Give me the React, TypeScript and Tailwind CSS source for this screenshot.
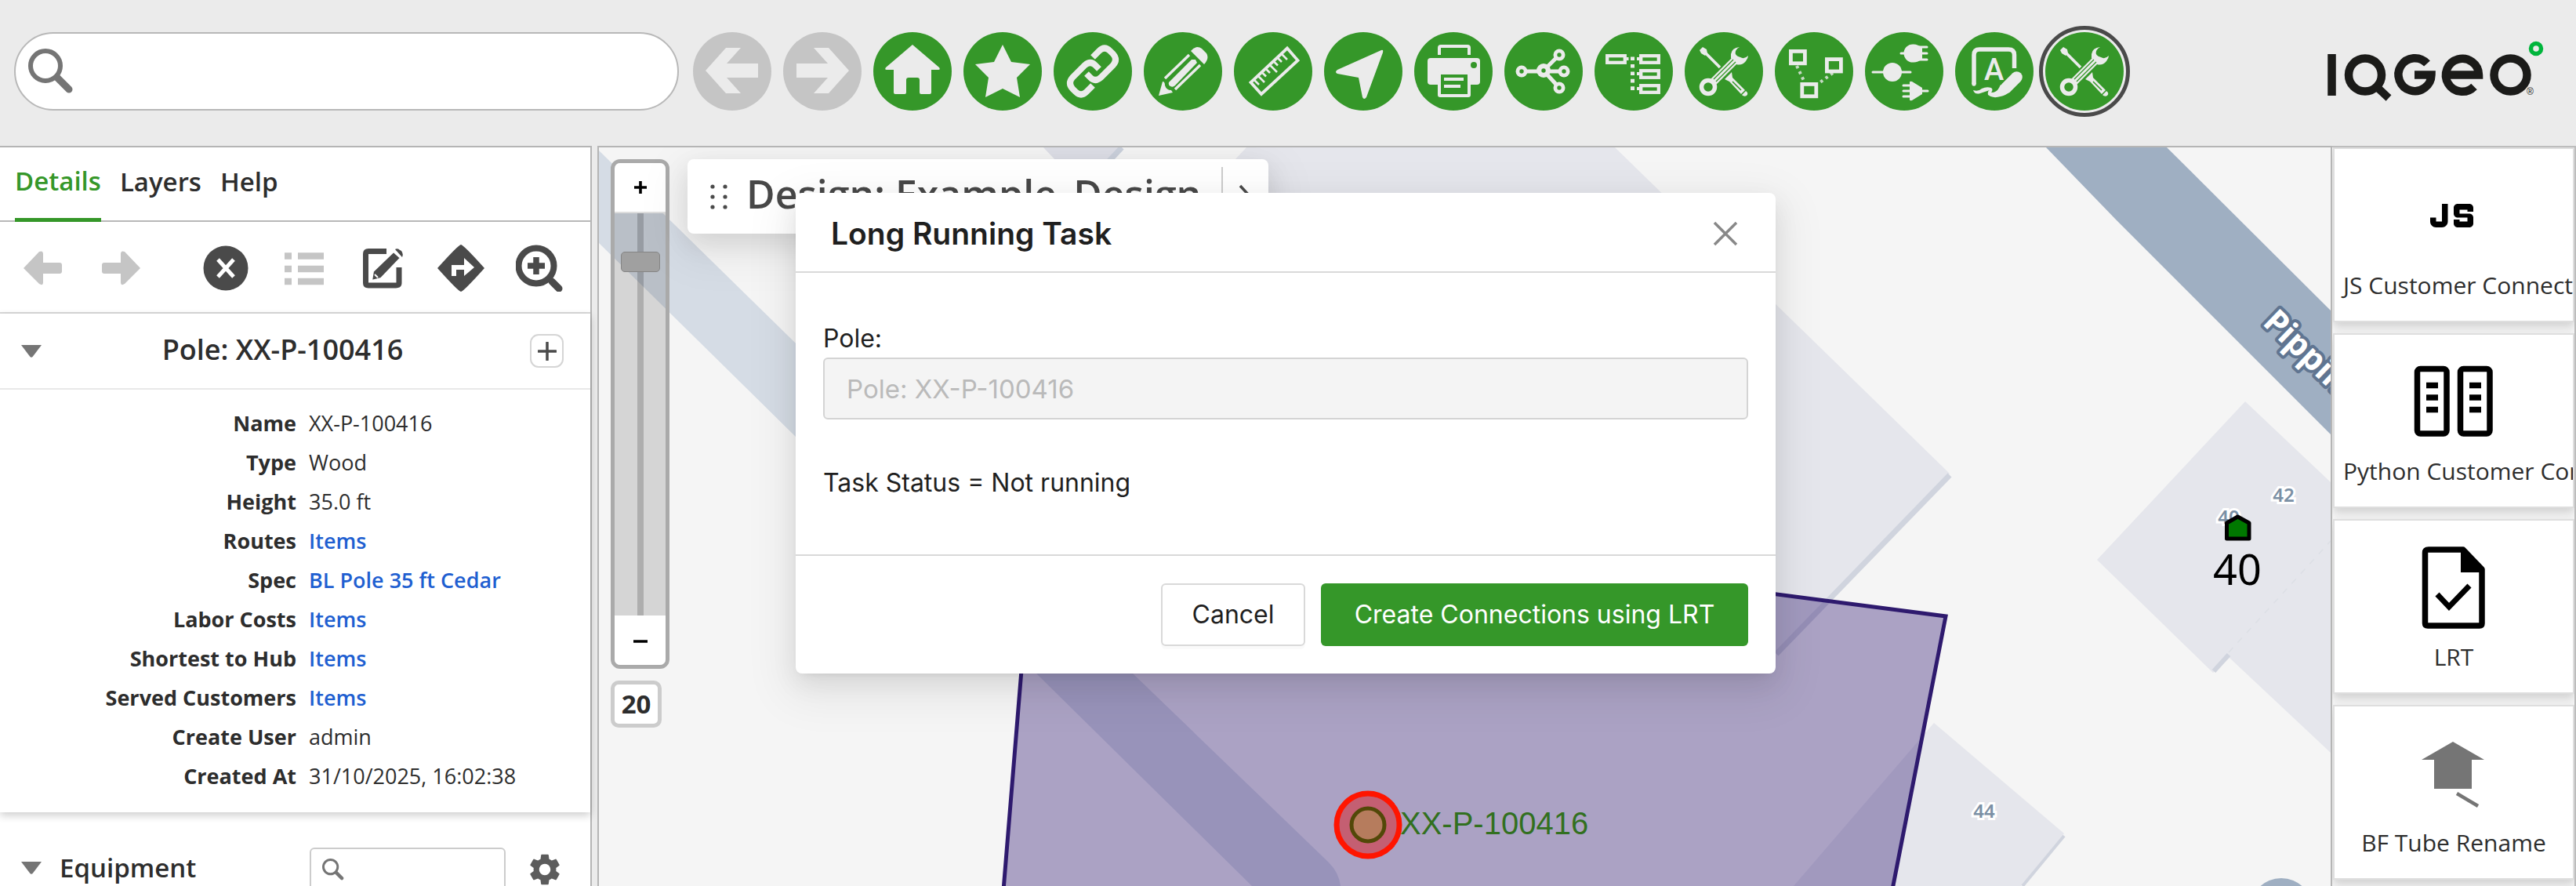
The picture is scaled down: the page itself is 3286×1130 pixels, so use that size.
import type { ReactNode } from "react";
import { MdJavascript, MdSettings } from "react-icons/md";

const G = "#359729";
const L = "#ebebeb";

/* ---------- toolbar glyphs, drawn on a 100 x 100 disc ---------- */

const BackGlyph = () => <path fill={L} d="M16 49 42 20H61L43 40H83V58H43L61 78H42Z" />;
const ForwardGlyph = () => <path fill={L} d="M84 49 58 20H39L57 40H17V58H57L39 78H58Z" />;
const HomeGlyph = () => (
  <path fill={L} d="M50 16 84 45Q86 48 83 48H74V77Q74 79 72 79H61Q59 79 59 77V61Q59 58 56 58H45Q42 58 42 61V77Q42 79 40 79H28Q26 79 26 77V48H17Q14 48 16 45Z" />
);
const StarGlyph = () => <path fill={L} d="M50 16 61 38 85 41 68 58 72 83 50 72 28 83 32 58 15 41 39 38Z" />;
const linkHalf = "M50 32 58 24Q65 17 72 24L76 28Q82 35 76 42L60 58Q53 64 47 58L42 53";
const LinkGlyph = () => (
  <g fill="none" stroke={L} strokeWidth="8">
    <path d={linkHalf} />
    <path d={linkHalf} transform="rotate(180 50 50)" />
  </g>
);
const PencilGlyph = () => (
  <g fill={L}>
    <path d="M60 24Q67 16 74 21L80 27Q84 33 77 41Z" />
    <path d="M27 59 58 29M40 73 72 42" stroke={L} strokeWidth="3.4" />
    <path d="M61 35 32 64Q31 68 34 69 37 71 40 68L68 39 66 35Z" />
    <path d="M19 81 24 63Q27 63 27 68 29 74 35 74L37 77Z" />
  </g>
);
const RulerGlyph = () => (
  <g fill="none" stroke={L}>
    <path d="M68 20.500 81.500 36 35 79 21.500 64Z" strokeWidth="3.800" />
    <path d="M26 61l6 6M31 56l8 8M36 51.500l5 5M41 47l5 5M46 42l9 9M51 37.500l5 5M56 33l5 5M61 28l7 7" strokeWidth="2.600" />
  </g>
);
const NavigateGlyph = () => (
  <path fill={L} d="M73 23Q76 22 75 26L54 83Q51 87 49 83L44 58 17 53Q13 51 17 48Z" />
);
const PrintGlyph = () => (
  <>
    <path d="M32 29V20Q32 18 34 18H68Q70 18 70 20V29" fill="none" stroke={L} strokeWidth="4" />
    <rect x="17" y="33" width="67" height="34" rx="4" fill={L} />
    <rect x="30" y="50" width="42" height="33" rx="3" fill={L} />
    <circle cx="76" cy="42" r="4" fill={G} />
    <rect x="34" y="54" width="34" height="25" fill={G} />
    <path d="M38 60H63M38 69H59" stroke={L} strokeWidth="4" />
  </>
);
const NodesGlyph = () => (
  <>
    <path d="M22 50H76M50 49 70 29M50 49 70 71" stroke={L} strokeWidth="5" />
    {[[22, 50, 7.5], [50, 49, 9], [70, 29, 7.5], [76, 50, 7.5], [70, 71, 7.5]].map(([x, y, r]) => (
      <g key={`${x}-${y}`}>
        <circle cx={x} cy={y} r={r} fill={L} />
        <circle cx={x} cy={y} r="2.700" fill={G} />
      </g>
    ))}
  </>
);
const TreeGlyph = () => (
  <>
    <path d="M41 34H43.500M54 34H57M54 53H57M54 72H57" stroke={L} strokeWidth="4" />
    <g fill="none" stroke={L} strokeWidth="4.300">
      <rect x="16.200" y="30.200" width="22.600" height="8.600" />
      <rect x="59.200" y="30.200" width="22.600" height="8.600" />
      <rect x="59.200" y="49.200" width="22.600" height="8.600" />
      <rect x="59.200" y="68.200" width="22.600" height="8.600" />
    </g>
    <path d="M48.500 31.500V74.500" stroke={L} strokeWidth="5" strokeDasharray="4.600 4.850" />
  </>
);
const ToolsGlyph = () => (
  <>
    <path d="M19 23 23 19 28 22 29 27 26 30 21 27Z" fill={L} />
    <path d="M27 27 45 45" stroke={L} strokeWidth="3.800" />
    <path d="M51 60 54 57 60 51 61 58 78 75Q82 78 79 81 75 83 72 79L57 63Z" fill={L} />
    <path d="M61 63 72 74M71 81 80 72" stroke={G} strokeWidth="1.500" />
    <path d="M35 65 64 36" stroke={L} strokeWidth="10" />
    <path d="M70 19Q60 20 59 28V33L66 41Q73 43 78 37 81 33 81 30 76 35 71 32 63 30 65 24 66 21 70 19Z" fill={L} />
    <path d="M37 60 62 35M40 63 65 38" stroke={G} strokeWidth="1.300" />
    <circle cx="30" cy="70" r="8.500" fill="none" stroke={L} strokeWidth="5.500" />
  </>
);
const TopologyGlyph = () => (
  <>
    <path d="M28 43 38 64M74 52 55 66" stroke={L} strokeWidth="4" strokeDasharray="3.500 4.500" opacity="0.8" />
    <g fill="none" stroke={L} strokeWidth="4.800">
      <rect x="20.400" y="24.400" width="18" height="15.400" />
      <rect x="66.400" y="34.600" width="18" height="15.400" />
      <rect x="34.800" y="66.400" width="18" height="15.400" />
    </g>
  </>
);
const PlugsGlyph = () => (
  <>
    <circle cx="35" cy="51" r="12" fill={L} />
    <path d="M73 20Q67 15 61 15.500A11.500 11.500 0 0 0 61 38.500Q67 39 73 34Z" fill={L} />
    <path d="M57 64Q57 62 60 63L73 71V79L60 87Q57 88 57 86Z" fill={L} />
    <path d="M10 51H58M46 27H79M68 19H79M68 35H79M49 68H60M49 75H80M49 82H60" stroke={L} strokeWidth="3" strokeLinecap="round" />
  </>
);
const AnnotateGlyph = () => (
  <>
    <path d="M24 66V29Q24 22 31 22H68Q75.500 22 75.500 29V46" fill="none" stroke={L} strokeWidth="5.500" />
    <circle cx="24" cy="66" r="2.700" fill={L} />
    <text x="49.500" y="61" textAnchor="middle" fontSize="38" fontWeight="500" fontFamily="Roboto, sans-serif" fill={L}>A</text>
    <path d="M79 57 62 74" stroke={G} strokeWidth="18" strokeLinecap="round" />
    <path d="M78.500 57.500 65 71" stroke={L} strokeWidth="14.500" strokeLinecap="round" />
    <path d="M58 67 70 76Q64 81 58 82 48 85 42 80 41 75 44 74 38 76 32 78 25 80 23 74 30 76 34 72 40 69 46 71 49 73 46 77 53 77 56 71Z" fill={L} />
  </>
);

function ToolButton({ label, glyph, disabled, active }: { label: string; glyph: ReactNode; disabled?: boolean; active?: boolean }) {
  return (
    <button
      type="button"
      aria-label={label}
      disabled={disabled}
      className={
        "size-[100px] shrink-0 rounded-full " +
        (disabled ? "bg-[#c5c5c5]" : "bg-[#359729]") +
        (active ? " outline-[5px] outline-offset-[3px] outline-[#4a4a4a]" : "")
      }
    >
      <svg viewBox="0 0 100 100" className="size-full">{glyph}</svg>
    </button>
  );
}

function Logo() {
  return (
    <svg viewBox="2969 50 280 84" className="ml-auto h-[84px] w-[280px] shrink-0" role="img" aria-label="IQGeo">
      <g fill="none" stroke="#1b1b19" strokeWidth="10.500">
        <path d="M2974.500 70V123" />
        <circle cx="3017" cy="96.500" r="21" />
        <path d="M3032 112 3047 126" strokeWidth="10" />
        <path d="M3096 82A21 21 0 1 0 3101.500 96.500H3080" />
        <path d="M3120 96.500H3162A21 21 0 1 0 3156 111.500" />
        <circle cx="3202.500" cy="96.500" r="21" />
      </g>
      <circle cx="3235" cy="63" r="6.500" fill="none" stroke="#00b53c" strokeWidth="5.500" />
      <text x="3223" y="122" fontSize="12" fontFamily="Liberation Sans, sans-serif" fill="#1b1b19">®</text>
    </svg>
  );
}

function SearchIcon({ className }: { className: string }) {
  return (
    <svg viewBox="0 0 58 58" className={className} aria-hidden="true">
      <circle cx="22" cy="22" r="19" fill="none" stroke="#757575" strokeWidth="6" />
      <path d="M37 37 52 52" stroke="#757575" strokeWidth="9" strokeLinecap="round" />
    </svg>
  );
}

function Header() {
  return (
    <header className="flex h-[186px] shrink-0 items-center bg-[#ebebeb] pr-[37px] pb-1 pl-[18px]">
      <label className="flex h-[100px] w-[848px] items-center rounded-full border-2 border-[#b8b8b8] bg-white pl-4">
        <SearchIcon className="size-[58px]" />
        <input aria-label="Search" className="h-full min-w-0 flex-1 bg-transparent px-4 text-[32px] outline-none" />
      </label>
      <nav className="ml-[18px] flex gap-[15px]">
        <ToolButton label="Back" disabled glyph={<BackGlyph />} />
        <ToolButton label="Forward" disabled glyph={<ForwardGlyph />} />
        <ToolButton label="Home" glyph={<HomeGlyph />} />
        <ToolButton label="Bookmarks" glyph={<StarGlyph />} />
        <ToolButton label="Share link" glyph={<LinkGlyph />} />
        <ToolButton label="Edit" glyph={<PencilGlyph />} />
        <ToolButton label="Measure" glyph={<RulerGlyph />} />
        <ToolButton label="Locate" glyph={<NavigateGlyph />} />
        <ToolButton label="Print" glyph={<PrintGlyph />} />
        <ToolButton label="Trace" glyph={<NodesGlyph />} />
        <ToolButton label="Hierarchy" glyph={<TreeGlyph />} />
        <ToolButton label="Tools" glyph={<ToolsGlyph />} />
        <ToolButton label="Topology" glyph={<TopologyGlyph />} />
        <ToolButton label="Connections" glyph={<PlugsGlyph />} />
        <ToolButton label="Annotate" glyph={<AnnotateGlyph />} />
        <ToolButton label="Custom tools" active glyph={<ToolsGlyph />} />
      </nav>
      <Logo />
    </header>
  );
}

/* ---------- details panel ---------- */

const fields: { name: string; value: string; link?: boolean }[] = [
  { name: "Name", value: "XX-P-100416" },
  { name: "Type", value: "Wood" },
  { name: "Height", value: "35.0 ft" },
  { name: "Routes", value: "Items", link: true },
  { name: "Spec", value: "BL Pole 35 ft Cedar", link: true },
  { name: "Labor Costs", value: "Items", link: true },
  { name: "Shortest to Hub", value: "Items", link: true },
  { name: "Served Customers", value: "Items", link: true },
  { name: "Create User", value: "admin" },
  { name: "Created At", value: "31/10/2025, 16:02:38" },
];

function PanelIcon({ label, disabled, className, children }: { label: string; disabled?: boolean; className?: string; children: ReactNode }) {
  return (
    <button type="button" aria-label={label} disabled={disabled} className={"size-[60px] shrink-0 " + (className ?? "")}>
      <svg viewBox="0 0 60 60" className="size-full">{children}</svg>
    </button>
  );
}

const Triangle = () => (
  <svg viewBox="0 0 26 16" className="h-4 w-[26px]" aria-hidden="true">
    <path d="M0 0H26L15 14.500Q13 17 11 14.500Z" fill="#757575" />
  </svg>
);

function Sidebar() {
  const dark = "#4a4a4a";
  const pale = "#c5c5c5";
  return (
    <aside className="flex w-[755px] shrink-0 flex-col border-t-2 border-r-2 border-[#b5b5b5] bg-white text-[#2d2d2d]">
      <div role="tablist" className="flex h-[95px] shrink-0 gap-6 border-b-2 border-[#b8b8b8] pl-[19px] text-[33px] font-semibold">
        <button role="tab" aria-selected="true" type="button" className="-mb-0.5 border-b-[5px] border-[#359729] pb-1 text-[#359729]">Details</button>
        <button role="tab" aria-selected="false" type="button" className="pb-1.5">Layers</button>
        <button role="tab" aria-selected="false" type="button" className="pb-1.5">Help</button>
      </div>

      <div className="flex h-[117px] shrink-0 items-center gap-10 border-b-2 border-[#d9d9d9] pt-0.5 pl-[25px]">
        <PanelIcon label="Previous" disabled>
          <path fill={pale} d="M5 30 25 9Q30 7 30 12V23H51Q54 23 54 26V34Q54 37 51 37H30V48Q30 53 25 50Z" />
        </PanelIcon>
        <PanelIcon label="Next" disabled>
          <path fill={pale} d="M54 30 34 9Q29 7 29 12V23H8Q5 23 5 26V34Q5 37 8 37H29V48Q29 53 34 50Z" />
        </PanelIcon>
        <PanelIcon label="Clear" className="ml-[33px]">
          <circle cx="30" cy="30" r="28.500" fill={dark} />
          <path d="M20 19 40 41M40 19 20 41" stroke="#fff" strokeWidth="5" />
        </PanelIcon>
        <PanelIcon label="List" disabled>
          <path d="M5 14.500H14M5 31H14M5 47H14M22 14.500H55M22 31H55M22 47H55" stroke={pale} strokeWidth="8.500" />
        </PanelIcon>
        <PanelIcon label="Edit">
          <path d="M35 8.500H12Q8.500 8.500 8.500 12V49Q8.500 52 12 52H47Q51 52 51 49V29" fill="none" stroke={dark} strokeWidth="7" />
          <path d="M44 9 53 17 28 43 16 46 18 34Z" fill={dark} stroke="#fff" strokeWidth="2" />
          <path d="M46 6Q49 4 54 8 57 12 55 16Z" fill={dark} />
          <path d="M20 38 24 42" stroke="#fff" strokeWidth="2" />
        </PanelIcon>
        <PanelIcon label="Directions">
          <path d="M30 0Q33 0 60 30 33 60 30 60 27 60 0 30 27 0 30 0Z" fill={dark} />
          <path d="M21 40V29H35" fill="none" stroke="#fff" strokeWidth="6" />
          <path d="M34 17 47 29 34 40Z" fill="#fff" />
        </PanelIcon>
        <PanelIcon label="Zoom to">
          <circle cx="26" cy="27" r="22.500" fill="none" stroke={dark} strokeWidth="8" />
          <path d="M15 27H37M26 16V38" stroke={dark} strokeWidth="7.500" />
          <path d="M46 47 55 56" stroke={dark} strokeWidth="9" strokeLinecap="round" />
        </PanelIcon>
      </div>

      <section className="shrink-0 shadow-[0_4px_10px_rgba(0,0,0,0.2)]">
        <div className="flex h-[97px] items-center border-b-2 border-[#e8e8e8] pr-[34px] pl-[27px]">
          <button type="button" aria-label="Collapse"><Triangle /></button>
          <h2 className="flex-1 pr-2 pb-1 text-center text-[36px] font-semibold">Pole: XX-P-100416</h2>
          <button type="button" aria-label="Add" className="flex size-[43px] items-center justify-center rounded-[11px] border-2 border-[#d5d5d5]">
            <svg viewBox="0 0 24 24" className="size-6"><path d="M12 1V23M1 12H23" stroke="#4a4a4a" strokeWidth="3.500" strokeLinecap="round" /></svg>
          </button>
        </div>
        <dl className="pt-[18px] pb-[21px] text-[27px] leading-[50px]">
          {fields.map((f) => (
            <div key={f.name} className="flex gap-4">
              <dt className="w-[378px] text-right font-bold">{f.name}</dt>
              <dd className="font-medium">
                {f.link ? <a href="#" className="font-semibold text-[#1f5fd1]">{f.value}</a> : f.value}
              </dd>
            </div>
          ))}
        </dl>
      </section>

      <section className="mt-[11px] flex flex-1 items-start pt-[34px] pr-[34px] pl-[27px]">
        <button type="button" aria-label="Collapse equipment" className="mt-[18px]"><Triangle /></button>
        <h2 className="ml-[23px] text-[33px] leading-[52px] font-semibold">Equipment</h2>
        <label className="ml-auto flex h-14 w-[250px] shrink-0 items-center rounded-md border-2 border-[#ccc] bg-white pl-[14px]">
          <SearchIcon className="size-7" />
          <input aria-label="Filter equipment" className="min-w-0 flex-1 bg-transparent px-2 text-[26px] outline-none" />
        </label>
        <button type="button" aria-label="Equipment settings" className="mt-1 ml-[26px]">
          <MdSettings className="size-12 text-[#5c5c5c]" />
        </button>
      </section>
    </aside>
  );
}

/* ---------- map ---------- */

function MapCanvas() {
  const label = { fontFamily: "Noto Sans, sans-serif", textAnchor: "middle" as const, paintOrder: "stroke" };
  return (
    <svg viewBox="764 188 2209 942" preserveAspectRatio="xMinYMin slice" className="absolute inset-0 size-full">
      <rect x="764" y="188" width="2209" height="942" fill="#f5f5f5" />
      <path d="M764 192 1444 858 1695 1100Q1708 1113 1710 1130H1597L1321 858 764 310Z" fill="#d5dce5" />
      <path d="M1331 188H1429L1380 240Z" fill="#dedfe7" />
      <path d="M1431 188 1390 232" stroke="#cbd1dc" strokeWidth="7" />
      <path d="M1590 188H2060L2487 604 2243 856 1390 400Z" fill="#e5e6ec" />
      <path d="M2487 606 2266 834" stroke="#d0d4de" strokeWidth="7" />
      <path d="M2864 512 2973 615V960L2844 839 2823 858 2675 714Z" fill="#e5e6ec" />
      <path d="M2824 856 2843 835" stroke="#d0d4de" strokeWidth="6" />
      <path d="M2843 832 2973 690" stroke="#dcdfe5" strokeWidth="1.500" strokeDasharray="8 9" />
      <path d="M2467 922 2633 1063 2578 1130H2288Z" fill="#e5e6ec" />
      <path d="M2633 1066 2580 1130" stroke="#d0d4de" strokeWidth="4" />
      <path d="M2610 188H2764L2973 396V554L2700 281Z" fill="#9fafc2" />
      <circle cx="2910" cy="1160" r="40" fill="#9fafc2" />

      <path d="M1321 635 2482 786 2409 1160H1278Z" fill="#3c257a" fillOpacity="0.4" stroke="#2e1a6e" strokeWidth="5" />

      <circle cx="1745" cy="1052" r="40" fill="#c45f72" stroke="#ff1500" strokeWidth="7" />
      <circle cx="1745" cy="1052" r="21" fill="#b67c5d" stroke="#524808" strokeWidth="5" />
      <text x="1786" y="1064" fontSize="40" fontFamily="Liberation Sans, sans-serif" fill="#32701f">XX-P-100416</text>

      <g fontSize="24" fontWeight="600" fill="#7b90a5" stroke="#ffffff" strokeWidth="6">
        <text x="2913" y="640" {...label}>42</text>
        <text x="2843" y="668" {...label}>40</text>
        <text x="2531" y="1043" {...label}>44</text>
      </g>
      <text
        x="0" y="0" transform="translate(2885 413) rotate(44)" fontSize="42" fontWeight="700"
        fontFamily="Noto Sans, sans-serif" fill="#fff" stroke="#607591" strokeWidth="8" strokeLinejoin="round" paintOrder="stroke"
      >Pippin</text>
      <path d="M2854.500 659 2869 667V687H2840.500V667Z" fill="#007800" stroke="#000" strokeWidth="5" strokeLinejoin="round" />
      <text x="2854" y="746" fontSize="54" fill="#000" {...label}>40</text>
    </svg>
  );
}

function ZoomControl() {
  return (
    <div className="flex flex-col items-start gap-[15px]">
      <div className="flex h-[650px] w-[75px] flex-col overflow-hidden rounded-xl border-[5px] border-[#aaaaaa] bg-black/13 bg-clip-padding">
        <button type="button" aria-label="Zoom in" className="flex h-16 items-center justify-center border-b-2 border-[#ddd] bg-white">
          <svg viewBox="0 0 16 16" className="size-4"><path d="M8 0V16M0 8H16" stroke="#000" strokeWidth="3.600" /></svg>
        </button>
        <div role="slider" aria-label="Zoom level" aria-valuenow={20} aria-valuemin={1} aria-valuemax={23} tabIndex={0} className="relative flex flex-1 justify-center">
          <div className="w-2 bg-black/18" />
          <div className="absolute top-[49px] left-2 h-[26px] w-[50px] rounded-[5px] border border-[#858585] bg-[#a0a0a0]" />
        </div>
        <button type="button" aria-label="Zoom out" className="flex h-[63px] items-center justify-center bg-white">
          <svg viewBox="0 0 18 18" className="size-[18px]"><path d="M0 10H18" stroke="#000" strokeWidth="3.600" /></svg>
        </button>
      </div>
      <div className="flex h-[60px] w-[65px] items-center justify-center rounded-[10px] border-[5px] border-[#cccccc] bg-white text-[33px] font-bold text-[#2d2d2d]">20</div>
    </div>
  );
}

function DesignBar() {
  return (
    <div className="ml-[23px] flex h-[95px] items-center rounded-lg bg-white pr-5 pl-[29px] shadow-[0_12px_32px_rgba(0,0,0,0.10),0_18px_56px_16px_rgba(0,0,0,0.05)]">
      <svg viewBox="0 0 22 32" className="h-8 w-[22px]" fill="#4a4a4a" aria-hidden="true">
        {[3, 16, 29].map((y) => (
          <g key={y}>
            <circle cx="3" cy={y} r="2.600" />
            <circle cx="19" cy={y} r="2.600" />
          </g>
        ))}
      </svg>
      <span className="ml-6 pb-2 text-[50px] leading-none font-semibold whitespace-nowrap text-[#484848]">Design: Example_Design</span>
      <span className="ml-[26px] h-[75px] w-0.5 bg-[#ccc]" />
      <button type="button" aria-label="Expand" className="ml-5">
        <svg viewBox="0 0 18 32" className="h-8 w-[18px]"><path d="M2 2 15 16 2 30" fill="none" stroke="#4a4a4a" strokeWidth="3.500" /></svg>
      </button>
    </div>
  );
}

/* ---------- right-hand tiles ---------- */

const PythonIcon = () => (
  <svg viewBox="0 0 120 120" className="size-[120px]">
    <g fill="none" stroke="#000" strokeWidth="7.500">
      <rect x="13.500" y="18.500" width="37.500" height="82.500" rx="4" />
      <rect x="68.500" y="18.500" width="37.500" height="82.500" rx="4" />
      <path d="M25 39.500H40M25 55H40M25 70.500H40M80 39.500H95M80 55H95M80 70.500H95" />
    </g>
  </svg>
);
const LrtIcon = () => (
  <svg viewBox="0 0 120 120" className="size-[120px]">
    <path d="M28 12H72L96 37V106Q96 109 93 109H27Q23.500 109 23.500 106V16Q23.500 12 28 12Z" fill="none" stroke="#000" strokeWidth="7.500" strokeLinejoin="round" />
    <path d="M69 11H73L99 38V41H69Z" />
    <path d="M39 69 54 85 80 58" fill="none" stroke="#000" strokeWidth="7" />
  </svg>
);
const TubeIcon = () => (
  <svg viewBox="0 0 120 120" className="size-[120px]">
    <path d="M59 20 99 43H83V80H35V43H19Z" fill="#757575" />
    <path d="M64 86 91 102" stroke="#757575" strokeWidth="4.500" />
  </svg>
);

function Tile({ label, icon }: { label: string; icon: ReactNode }) {
  return (
    <button
      type="button"
      className="flex h-[223px] w-full shrink-0 flex-col items-center overflow-hidden border-2 border-[#dedede] bg-white px-[11px] pt-[25px] shadow-[0_6px_12px_rgba(0,0,0,0.16)]"
    >
      {icon}
      <span className="mt-1 flex max-w-full justify-start text-[30px] leading-[50px] whitespace-nowrap text-[#2d2d2d]">{label}</span>
    </button>
  );
}

/* ---------- dialog ---------- */

function TaskDialog() {
  return (
    <div className="pointer-events-none absolute inset-0 flex items-start justify-center pt-[246px] pr-1.5">
      <div
        role="dialog"
        aria-labelledby="task-title"
        className="pointer-events-auto flex w-[1250px] flex-col rounded-lg bg-white font-[Inter,sans-serif] text-[32px] text-[#1f1f1f] shadow-[0_12px_32px_rgba(0,0,0,0.08),0_6px_12px_-8px_rgba(0,0,0,0.12),0_18px_56px_16px_rgba(0,0,0,0.06)]"
      >
        <div className="flex h-[102px] items-center justify-between border-b-2 border-[#d9d9d9] pt-1 pr-12 pl-[45px]">
          <h1 id="task-title" className="text-[39px] font-semibold">Long Running Task</h1>
          <button type="button" aria-label="Close">
            <svg viewBox="0 0 32 32" className="size-8"><path d="M2 2 30 30M30 2 2 30" stroke="#888" strokeWidth="3.500" /></svg>
          </button>
        </div>
        <div className="flex h-[359px] flex-col px-[35px] pt-[60px]">
          <label htmlFor="pole" className="leading-[48px]">Pole:</label>
          <input
            id="pole"
            disabled
            value="Pole: XX-P-100416"
            className="h-[79px] w-full rounded-md border-2 border-[#d4d4d4] bg-[#f4f4f4] px-[28px] text-[33px] text-[#bababa]"
          />
          <p className="mt-[57px] leading-[48px]">Task Status = Not running</p>
        </div>
        <div className="flex justify-end gap-5 border-t-2 border-[#d9d9d9] p-[35px]">
          <button type="button" className="h-20 w-[184px] rounded-md border-2 border-[#d9d9d9] bg-white shadow-[0_4px_0_rgba(0,0,0,0.02)]">Cancel</button>
          <button type="button" className="h-20 w-[545px] rounded-md bg-[#359729] whitespace-nowrap text-white">Create Connections using LRT</button>
        </div>
      </div>
    </div>
  );
}

export default function App() {
  return (
    <div className="relative flex h-screen flex-col overflow-hidden bg-[#ebebeb] font-['Open_Sans','Noto_Sans',sans-serif]">
      <Header />
      <div className="flex min-h-0 flex-1">
        <Sidebar />
        <main className="relative ml-[7px] min-w-0 flex-1 overflow-hidden border-x-2 border-t-2 border-[#b5b5b5]">
          <MapCanvas />
          <div className="relative flex items-start pt-[15px] pl-[15px]">
            <ZoomControl />
            <DesignBar />
          </div>
        </main>
        <aside className="flex w-[311px] shrink-0 flex-col gap-3.5 overflow-hidden border-t-2 border-r-2 border-[#bdbdbd] bg-[#f7f7f7] pl-px">
          <Tile label="JS Customer Connections" icon={<MdJavascript className="size-[120px] shrink-0 text-black" />} />
          <Tile label="Python Customer Connections" icon={<PythonIcon />} />
          <Tile label="LRT" icon={<LrtIcon />} />
          <Tile label="BF Tube Rename" icon={<TubeIcon />} />
        </aside>
      </div>
      <TaskDialog />
    </div>
  );
}
